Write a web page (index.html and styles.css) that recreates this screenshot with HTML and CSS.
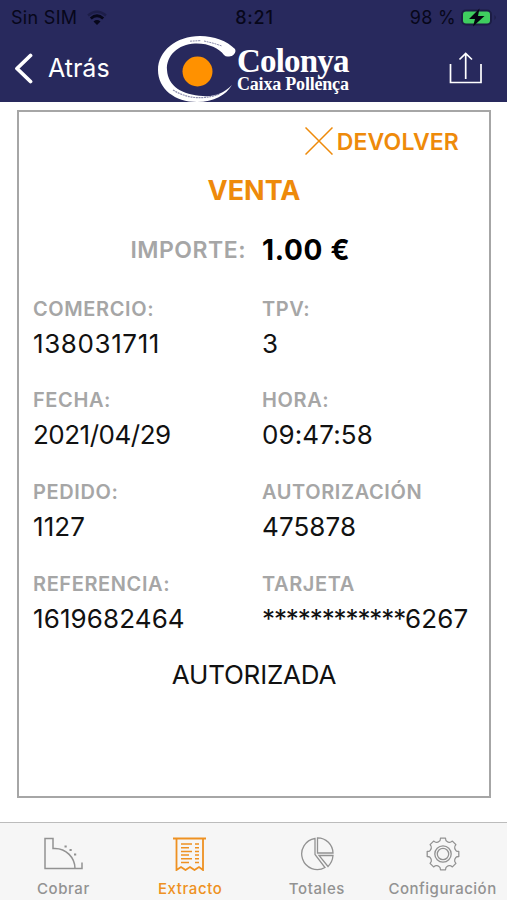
FILE: index.html
```html
<!DOCTYPE html>
<html lang="es">
<head>
  <meta charset="UTF-8">
  <meta name="viewport" content="width=device-width, initial-scale=1.0">
  <title>Extracto</title>
  <link rel="stylesheet" href="styles.css">
</head>
<body>
  <header class="header">
    <div class="status">
      <div class="status-left">
        <span class="carrier">Sin SIM</span>
        <svg class="wifi" width="22" height="16" viewBox="0 0 22 16" fill="none" stroke="#07071a">
          <path d="M2 5.5Q11 -2 20 5.5" stroke-width="2.5" opacity=".3"/>
          <path d="M4.8 8.5Q11 3 17.2 8.5" stroke-width="2.9"/>
          <path d="M7.5 11.5Q11 8.6 14.5 11.5L11 15Z" fill="#07071a" stroke="none"/>
        </svg>
      </div>
      <span class="time">8:21</span>
      <div class="status-right">
        <span class="percent">98 %</span>
        <svg class="battery" width="38" height="20" viewBox="0 0 38 20">
          <rect x="1" y="1.5" width="31" height="16" rx="5" fill="#1c1d45"/>
          <rect x="3" y="3.5" width="27" height="12" rx="3" fill="#3fce5f"/>
          <path d="M34.5 7Q37 9.5 34.5 12Z" fill="#1c1d45"/>
          <path d="M19.5 0.5L9 11H15L13 18.5L24.5 8H18Z" fill="#050510"/>
        </svg>
      </div>
    </div>
    <nav class="navbar">
      <a class="back">
        <svg width="20" height="32" viewBox="0 0 20 32" fill="none" stroke="#fff" stroke-width="3.8" stroke-linecap="round" stroke-linejoin="round">
          <path d="M17.5 2.5L4 15.5L17.5 28.5"/>
        </svg>
        <span>Atrás</span>
      </a>
      <div class="logo">
        <svg width="79" height="66" viewBox="0 0 79 66">
          <path d="M70.5 20.5C74 21 79 17 77 13C69 5 56 0 42 0C18 0 0 15 0 34C0 53 17 66 39 66C56 66 68 59 74 49C65 58 56 61 45 60C24 59 10 50 9 34C8 20 20 8 37 7.5C50 7 61 12 66 19Q68 21 70.5 20.5Z" fill="#fff"/>
          <path d="M32 5.2L43 4.6M46 5L56 7.4L64 10" fill="none" stroke="#8d8eae" stroke-width="1" stroke-dasharray="2 .7"/>
          <path d="M15 54Q36 67 62 58" fill="none" stroke="#8d8eae" stroke-width="1.2" stroke-dasharray="2 .7"/>
          <circle cx="39.5" cy="35.5" r="15" fill="#ff9100"/>
        </svg>
        <div class="logo-text">
          <span class="logo-name">Colonya</span>
          <span class="logo-sub">Caixa Pollença</span>
        </div>
      </div>
      <svg class="share" width="34" height="34" viewBox="0 0 34 34" fill="none" stroke="#fff" stroke-width="1.7">
        <path d="M1.500 12V30.500H32V12M16.700 27V1.500M10.500 7.500L16.700 1.500L23 7.500"/>
      </svg>
    </nav>
  </header>

  <main class="content">
    <section class="ticket">
      <div class="refund">
        <svg width="28" height="28" viewBox="0 0 28 28" fill="none" stroke="#ee8a0a" stroke-width="1.5">
          <path d="M.5 .5L27.5 27.5M27.5 .5L.5 27.5"/>
        </svg>
        <span>DEVOLVER</span>
      </div>
      <h1 class="title">VENTA</h1>
      <div class="amount">
        <span class="amount-label">IMPORTE:</span>
        <span class="amount-value">1.00 €</span>
      </div>
      <dl class="data">
        <div class="item"><dt>COMERCIO:</dt><dd class="shop">138031711</dd></div>
        <div class="item"><dt>TPV:</dt><dd>3</dd></div>
        <div class="item"><dt>FECHA:</dt><dd class="date">2021/04/29</dd></div>
        <div class="item"><dt>HORA:</dt><dd>09:47:58</dd></div>
        <div class="item"><dt>PEDIDO:</dt><dd>1127</dd></div>
        <div class="item"><dt>AUTORIZACIÓN</dt><dd>475878</dd></div>
        <div class="item"><dt>REFERENCIA:</dt><dd>1619682464</dd></div>
        <div class="item"><dt>TARJETA</dt><dd><span class="mask">************</span>6267</dd></div>
      </dl>
      <p class="result">AUTORIZADA</p>
    </section>
  </main>

  <footer class="tabs">
    <a class="tab">
      <svg width="40" height="34" viewBox="0 0 40 34" fill="none" stroke="#929292" stroke-width="1.5">
        <path d="M2 31.5V1.5H10V11.5H12A20 20 0 0 1 32 31.5M1.3 31.5H39V25.5"/>
        <path d="M21.5 9.5h2.2M26.5 13h2.2M31 17.5h2.2" stroke-width="2.2"/>
      </svg>
      <span>Cobrar</span>
    </a>
    <a class="tab active">
      <svg width="34" height="34" viewBox="0 0 34 34" fill="none" stroke="#ee9122" stroke-width="1.8">
        <path d="M0 1.5H33M3.5 1.5V33L8 30L12.5 33L17 30L21.5 33L26 30L30 33V1.5"/>
        <path d="M8 7h11M8 10.7h8M8 14.4h11M8 18.1h8M8 21.8h11M8 25.5h8M22 7h4M22 10.7h4M22 14.4h4M22 18.1h4M22 21.8h4M22 25.5h4" stroke-width="1.5"/>
      </svg>
      <span>Extracto</span>
    </a>
    <a class="tab">
      <svg width="34" height="34" viewBox="0 0 34 34" fill="none" stroke="#929292" stroke-width="1.3">
        <path d="M15 1.5A15.6 15.6 0 1 0 25 30.5L15 17.5Z"/>
        <path d="M17.5 .8V16H33A15.5 15.5 0 0 0 17.5 .8Z"/>
        <path d="M19 18.5H33Q32.5 25 28 29.5Z"/>
      </svg>
      <span>Totales</span>
    </a>
    <a class="tab settings">
      <svg width="34" height="34" viewBox="-17 -17 34 34" fill="none" stroke="#929292" stroke-width="1.3" stroke-linejoin="round">
        <path d="M-3.7 -12.8Q-2.7 -13 -2.5 -15.8H2.5Q2.7 -13 3.7 -12.8Q5.5 -11.5 6.4 -11.7Q7.2 -11.2 9.4 -12.9L12.9 -9.4Q11.2 -7.2 11.7 -6.4Q11.5 -5.5 12.8 -3.7Q13 -2.7 15.8 -2.5V2.5Q13 2.7 12.8 3.7Q11.5 5.5 11.7 6.4Q11.2 7.2 12.9 9.4L9.4 12.9Q7.2 11.2 6.4 11.7Q5.5 11.5 3.7 12.8Q2.7 13 2.5 15.8H-2.5Q-2.7 13 -3.7 12.8Q-5.5 11.5 -6.4 11.7Q-7.2 11.2 -9.4 12.9L-12.9 9.4Q-11.2 7.2 -11.7 6.4Q-11.5 5.5 -12.8 3.7Q-13 2.7 -15.8 2.5V-2.5Q-13 -2.7 -12.8 -3.7Q-11.5 -5.5 -11.7 -6.4Q-11.2 -7.2 -12.9 -9.4L-9.4 -12.9Q-7.2 -11.2 -6.4 -11.7Q-5.5 -11.5 -3.7 -12.8Z"/>
        <circle r="8.2"/>
        <circle r="5.7"/>
      </svg>
      <span>Configuración</span>
    </a>
  </footer>
</body>
</html>
```
FILE: styles.css
```css
* {
  box-sizing: border-box;
}
body {
  margin: 0;
  height: 900px;
  display: flex;
  flex-direction: column;
  font-family: Inter, 'Liberation Sans', sans-serif;
  background: #fff;
  color: #111;
  white-space: nowrap;
  overflow: hidden;
}
svg {
  display: block;
  flex-shrink: 0;
}
.header {
  height: 102px;
  background: #28295d;
}
.status {
  height: 35px;
  display: grid;
  grid-template-columns: 1fr auto 1fr;
  align-items: center;
  padding: 0 9px 0 11px;
  font-size: 18px;
  line-height: 35px;
  color: #07071a;
}
.status-left,
.status-right {
  display: flex;
  align-items: center;
}
.status-left {
  gap: 9px;
}
.carrier {
  letter-spacing: 0.3px;
}
.status-right {
  justify-content: flex-end;
  gap: 4px;
}
.percent {
  letter-spacing: 0.3px;
}
.time {
  font-weight: 500;
  letter-spacing: 0.8px;
}
.navbar {
  height: 67px;
  display: grid;
  grid-template-columns: 145px 1fr auto;
  align-items: center;
  padding: 0 24px 0 13px;
}
.back {
  display: flex;
  align-items: center;
  gap: 15px;
  color: #fff;
  font-size: 25px;
}
.back span {
  margin-top: -2px;
}
.logo {
  display: flex;
  align-items: center;
}
.logo-text {
  display: flex;
  flex-direction: column;
  font-family: 'Liberation Serif', serif;
  font-weight: bold;
  color: #fff;
}
.logo-name {
  margin-top: 5px;
  font-size: 33px;
  line-height: 26px;
  letter-spacing: -0.8px;
}
.logo-sub {
  font-size: 18px;
  line-height: 21px;
  letter-spacing: -0.2px;
}
.content {
  height: 720px;
  padding: 8px 16px 24px 17px;
}
.ticket {
  height: 688px;
  border: 2px solid #a6a6a6;
  padding: 14px 14px 0;
}
.refund {
  display: flex;
  justify-content: flex-end;
  align-items: center;
  gap: 4px;
  height: 30px;
  padding-right: 16px;
  font-size: 23px;
  font-weight: 600;
  letter-spacing: 0.15px;
  color: #ee8a0a;
}
.refund span {
  margin-top: 2px;
}
.title {
  margin: 19px 0 0;
  text-align: center;
  font-size: 27px;
  line-height: 32px;
  font-weight: 700;
  color: #ee8a0a;
}
.amount {
  display: grid;
  grid-template-columns: 213px 1fr;
  gap: 16px;
  align-items: center;
  margin-top: 26px;
  height: 34px;
}
.amount-label {
  text-align: right;
  font-size: 23px;
  font-weight: 600;
  letter-spacing: 0.5px;
  color: #a6a6a6;
}
.amount-value {
  font-size: 28px;
  font-weight: 700;
  letter-spacing: 0.7px;
  color: #000;
}
.data {
  display: grid;
  grid-template-columns: 229px 1fr;
  grid-auto-rows: 91.7px;
  margin: 29.6px 0 0;
}
.item dt {
  font-size: 20px;
  line-height: 24px;
  font-weight: 600;
  letter-spacing: 0.6px;
  color: #a6a6a6;
}
.item dd {
  margin: 7px 0 0;
  font-size: 26px;
  line-height: 32px;
  letter-spacing: 0.1px;
}
.item .shop {
  letter-spacing: 0.6px;
}
.item .date {
  letter-spacing: -0.5px;
}
.mask {
  letter-spacing: -1.1px;
}
.result {
  margin: -4.6px 0 0;
  text-align: center;
  font-size: 26px;
  line-height: 32px;
  letter-spacing: -0.2px;
}
.tabs {
  height: 78px;
  display: grid;
  grid-template-columns: repeat(4, 1fr);
  background: #f6f6f6;
  border-top: 1px solid #bcbcbc;
}
.tab {
  display: flex;
  flex-direction: column;
  align-items: center;
  gap: 7px;
  padding-top: 14px;
  font-size: 15px;
  line-height: 22px;
  font-weight: 500;
  letter-spacing: 0.6px;
  color: #929292;
}
.tab.active {
  color: #ee9122;
}
.settings {
  padding-right: 2px;
  letter-spacing: 0.5px;
}
```
